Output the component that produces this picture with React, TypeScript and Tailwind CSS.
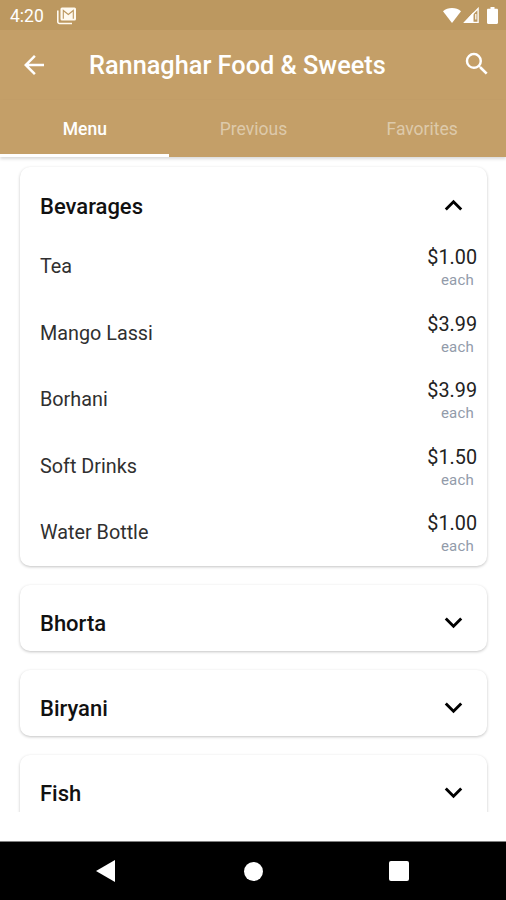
import React, { useState } from 'react';
import { MdArrowBack, MdExpandLess, MdExpandMore, MdSearch } from 'react-icons/md';

// ===============================================
// TYPES
// ===============================================
interface MenuItem {
  name: string;
  price: string;
}

interface MenuCategory {
  title: string;
  items: MenuItem[];
}

// ===============================================
// DATA
// ===============================================
const TABS = ['Menu', 'Previous', 'Favorites'];

const CATEGORIES: MenuCategory[] = [
  {
    title: 'Bevarages',
    items: [
      { name: 'Tea', price: '$1.00' },
      { name: 'Mango Lassi', price: '$3.99' },
      { name: 'Borhani', price: '$3.99' },
      { name: 'Soft Drinks', price: '$1.50' },
      { name: 'Water Bottle', price: '$1.00' },
    ],
  },
  { title: 'Bhorta', items: [] },
  { title: 'Biryani', items: [] },
  { title: 'Fish', items: [] },
];

// ===============================================
// ICONS
// ===============================================
const MailStackIcon = () => (
  <svg width="20" height="18" viewBox="0 0 20 18" fill="none">
    <path d="M.8 3.500v11.200a1.800 1.800 0 0 0 1.800 1.800h12.400" stroke="#fffaf0" strokeWidth="1.600" />
    <rect x="3.500" y="0.500" width="15.500" height="13" rx="1.500" fill="#fffaf0" />
    <path d="M6.300 11.700V3.500l5 4 5-4v8.200" stroke="#bc9860" strokeWidth="1.100" />
  </svg>
);

const WifiIcon = () => (
  <svg width="18" height="15" viewBox="0 0 18 15" fill="white">
    <path d="M9 15 0 3.2C2.500 1.200 5.500 0 9 0s6.500 1.200 9 3.200z" />
  </svg>
);

const SignalIcon = () => (
  <svg width="16" height="16" viewBox="0 0 16 16" fill="none">
    <path d="M10.500 5v10.500H1z" fill="white" />
    <path d="M15.100 1.500v13.800H1.700z" stroke="white" strokeWidth="1.300" />
    <path d="M12.800 7v5.500" stroke="white" strokeWidth="1.200" />
  </svg>
);

const BatteryIcon = () => (
  <svg width="11" height="17" viewBox="0 0 11 17" fill="white">
    <path d="M3.500 0h4v1.700h2.300c.7 0 1.200.5 1.200 1.200v12.900c0 .7-.5 1.200-1.200 1.200H1.200C.5 17 0 16.500 0 15.800V2.900c0-.7.5-1.200 1.200-1.200h2.300z" />
  </svg>
);

// ===============================================
// STATUS BAR
// ===============================================
const StatusBar = () => (
  <div className="flex h-[30px] shrink-0 items-center bg-[#bc9860] pr-2 pl-[10px] text-white">
    <span className="mt-[2px] text-[17.5px]">4:20</span>
    <div className="mt-[1px] ml-[13px]">
      <MailStackIcon />
    </div>
    <div className="ml-auto flex items-center">
      <WifiIcon />
      <div className="mr-2 ml-[2px]">
        <SignalIcon />
      </div>
      <BatteryIcon />
    </div>
  </div>
);

// ===============================================
// CATEGORY CARD
// ===============================================
const CategoryCard: React.FC<{
  category: MenuCategory;
  open: boolean;
  onToggle: () => void;
}> = ({ category, open, onToggle }) => (
  <div className="shrink-0 rounded-[10px] bg-white shadow-[0_1px_3px_rgba(0,0,0,0.24)]">
    <button
      onClick={onToggle}
      className="flex h-[66px] w-full items-center justify-between pt-3 pr-4 pl-5 text-left"
    >
      <span className="text-[22px] font-medium text-[#111]">{category.title}</span>
      <span className="-mt-[2px]">{open ? <MdExpandLess size={35} /> : <MdExpandMore size={35} />}</span>
    </button>
    {open &&
      category.items.map((item) => (
        <div key={item.name} className="flex h-[66.5px] items-center justify-between pt-[2px] pr-[10px] pl-5">
          <span className="text-[19.8px] text-[#303030]">{item.name}</span>
          <div className="flex flex-col items-end pt-[2px]">
            <span className="text-[19.8px] leading-[25px] text-[#222]">{item.price}</span>
            <span className="pr-[3px] text-[15px] leading-[21px] tracking-[0.2px] text-[#929baa]">each</span>
          </div>
        </div>
      ))}
  </div>
);

// ===============================================
// MAIN COMPONENT
// ===============================================
const App: React.FC = () => {
  const [activeTab, setActiveTab] = useState('Menu');
  const [openCategory, setOpenCategory] = useState<string | null>('Bevarages');

  return (
    <div className="flex h-[900px] w-[506px] flex-col overflow-hidden bg-white font-['Roboto',sans-serif]">
      <StatusBar />

      {/* Header */}
      <div className="shrink-0 bg-[#c49f68] text-white">
        <div className="flex h-[70px] items-center pr-[14px] pl-[19px]">
          <MdArrowBack size={30} />
          <h1 className="ml-10 pt-[2px] text-[25.3px] font-medium">Rannaghar Food &amp; Sweets</h1>
          <MdSearch size={30} className="-mt-[2px] ml-auto" />
        </div>
        <div className="grid h-[57px] grid-cols-3 shadow-[0_2px_3px_rgba(0,0,0,0.15)]">
          {TABS.map((tab) => (
            <button
              key={tab}
              onClick={() => setActiveTab(tab)}
              className={`border-b-[3px] pt-[5px] pl-[1px] text-[17.5px] ${
                tab === activeTab ? 'border-white font-medium' : 'border-transparent text-white/45'
              }`}
            >
              {tab}
            </button>
          ))}
        </div>
      </div>

      {/* Menu list */}
      <div className="flex h-[655px] shrink-0 flex-col gap-[19px] overflow-hidden pt-[10px] pr-[19px] pl-5">
        {CATEGORIES.map((category) => (
          <CategoryCard
            key={category.title}
            category={category}
            open={openCategory === category.title}
            onToggle={() => setOpenCategory(openCategory === category.title ? null : category.title)}
          />
        ))}
      </div>

      {/* Android navigation */}
      <div className="mt-auto flex h-[59px] shrink-0 items-center border-t border-[#808080] bg-black pl-[96px]">
        <svg width="19" height="22" viewBox="0 0 19 22" fill="white">
          <path d="M19 0v22L0 11z" />
        </svg>
        <div className="ml-[129px] size-[19px] rounded-full bg-white" />
        <div className="ml-[126px] size-5 rounded-[2px] bg-white" />
      </div>
    </div>
  );
};

export default App;
